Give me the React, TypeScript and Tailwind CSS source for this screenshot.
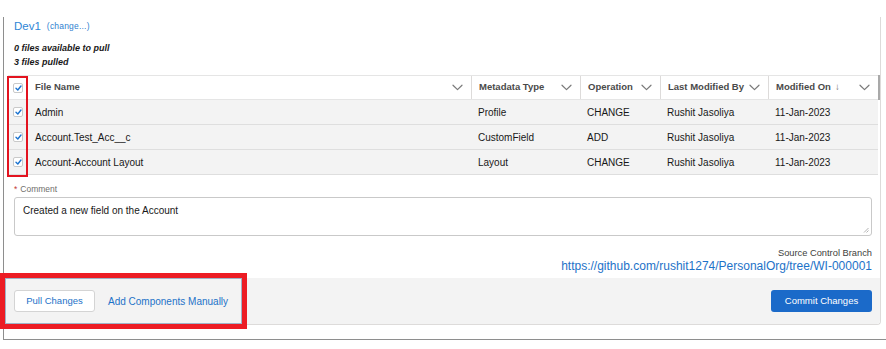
import React from "react";

const Chevron = () => (
  <svg width="11" height="7" viewBox="0 0 11 7" fill="none" className="shrink-0">
    <path d="M1 1.2 L5.5 5.6 L10 1.2" stroke="#7a7a7a" strokeWidth="1.2" strokeLinecap="round" strokeLinejoin="round" />
  </svg>
);

const Check = () => (
  <div className="w-[10px] h-[10px] bg-white border border-[#c9c9c9] rounded-[2px] flex items-center justify-center">
    <svg width="7" height="6" viewBox="0 0 7 6" fill="none">
      <path d="M1 3.3 L2.8 5 L6 1" stroke="#1b73d0" strokeWidth="1.4" strokeLinecap="round" strokeLinejoin="round" />
    </svg>
  </div>
);

const rows = [
  ["Admin", "Profile", "CHANGE", "Rushit Jasoliya", "11-Jan-2023"],
  ["Account.Test_Acc__c", "CustomField", "ADD", "Rushit Jasoliya", "11-Jan-2023"],
  ["Account-Account Layout", "Layout", "CHANGE", "Rushit Jasoliya", "11-Jan-2023"],
];

const HeadCell = ({ label, w, divider = true, arrow = false }: { label: string; w: string; divider?: boolean; arrow?: boolean }) => (
  <div className={`${w} h-full flex items-center justify-between pl-[7px] pr-[8px] ${divider ? "border-l border-[#dddbda]" : ""}`}>
    <span className="text-[9.5px] font-bold text-[#4a4a4a] whitespace-nowrap">
      {label}
      {arrow && <span className="ml-[4px] font-normal text-[#706e6b]">↓</span>}
    </span>
    <Chevron />
  </div>
);

export default function App() {
  return (
    <div className="w-[886px] h-[349px] bg-white overflow-hidden relative font-['Liberation_Sans',Arial,sans-serif] text-[#181818]">
      <div className="ml-[3px] mt-[17px] h-[323px] w-[883px] border-l border-b border-[#8e8e8e]">
        <div className="w-[877px] h-[308px] border-r border-b border-[#dddbda] rounded-br-[4px] flex flex-col">
          <div className="pl-[10px] pt-[1px] h-[17px] flex items-center gap-[6px]">
            <span className="text-[11.5px] leading-[16px] text-[#2f86d6]">Dev1</span>
            <span className="text-[8.5px] leading-[16px] text-[#2f7fcf] tracking-[0.2px]">(change...)</span>
          </div>
          <div className="pl-[10px] mt-[7px] text-[9px] leading-[14px] font-bold italic text-[#181818]">
            <div>0 files available to pull</div>
            <div>3 files pulled</div>
          </div>

          <div className="ml-[4px] mt-[6px] w-[870px] relative">
            <div className="h-[25px] flex border-t border-b border-[#e5e5e5] bg-white">
              <div className="w-[20px] h-full flex items-center justify-center">
                <Check />
              </div>
              <HeadCell label="File Name" w="w-[443px]" divider={false} />
              <HeadCell label="Metadata Type" w="w-[109px]" />
              <HeadCell label="Operation" w="w-[80px]" />
              <HeadCell label="Last Modified By" w="w-[108px]" />
              <HeadCell label="Modified On" w="w-[110px]" arrow />
            </div>
            {rows.map((r, i) => (
              <div key={i} className="h-[25px] flex bg-[#f3f3f3] border-b border-[#dedede] text-[10px]">
                <div className="w-[20px] h-full flex items-center justify-center">
                  <Check />
                </div>
                <div className="w-[443px] pl-[7px] flex items-center">{r[0]}</div>
                <div className="w-[109px] pl-[7px] flex items-center">{r[1]}</div>
                <div className="w-[80px] pl-[7px] flex items-center">{r[2]}</div>
                <div className="w-[108px] pl-[7px] flex items-center">{r[3]}</div>
                <div className="w-[110px] pl-[7px] flex items-center">{r[4]}</div>
              </div>
            ))}
            <div className="absolute right-[-2px] top-[0px] w-[2px] h-[25px] bg-[#a9a9a9]" />
            <div className="absolute left-[-1px] top-[1px] w-[21px] h-[101px] border-2 border-[#e3131f]" />
          </div>

          <div className="pl-[10px] pr-[8px]">
            <div className="pt-[8px] text-[8.5px] leading-[12px] text-[#706e6b]">
              <span className="text-[#c23934] mr-[3px]">*</span>Comment
            </div>
            <div className="mt-[2px] h-[39px] border border-[#c9c9c9] rounded-[3px] px-[8px] pt-[6px] text-[10px] leading-[14px] relative">
              Created a new field on the Account
              <svg width="6" height="6" viewBox="0 0 6 6" className="absolute right-[2px] bottom-[2px]">
                <path d="M5.5 1 L1 5.5 M5.5 3.5 L3.5 5.5" stroke="#a0a0a0" strokeWidth="0.8" />
              </svg>
            </div>
            <div className="mt-[11px] text-right text-[9.3px] leading-[12px] text-[#3e3e3c]">Source Control Branch</div>
            <div className="text-right text-[12px] leading-[14px] text-[#1d72c8]">
              https://github.com/rushit1274/PersonalOrg/tree/WI-000001
            </div>
          </div>

          <div className="mt-[5px] h-[46px] bg-[#f3f3f3] rounded-br-[4px] flex items-center justify-between pl-[10px] pr-[8px] relative">
            <div className="flex items-center">
              <div className="h-[22px] w-[81px] bg-white border border-[#d4d4d4] rounded-[3px] flex items-center justify-center text-[9.5px] text-[#1d72c8]">
                Pull Changes
              </div>
              <div className="ml-[13px] text-[10px] text-[#1d72c8]">Add Components Manually</div>
            </div>
            <div className="h-[22px] w-[101px] bg-[#1b6ac9] rounded-[3px] flex items-center justify-center text-[9.5px] text-white">
              Commit Changes
            </div>
          </div>
        </div>
      </div>

      <div className="absolute left-0 top-[273px] w-[247px] h-[56px] border-[5px] border-[#ec1c24]">
        <div className="w-full h-full border border-[#9fb3c8]" />
      </div>
    </div>
  );
}
